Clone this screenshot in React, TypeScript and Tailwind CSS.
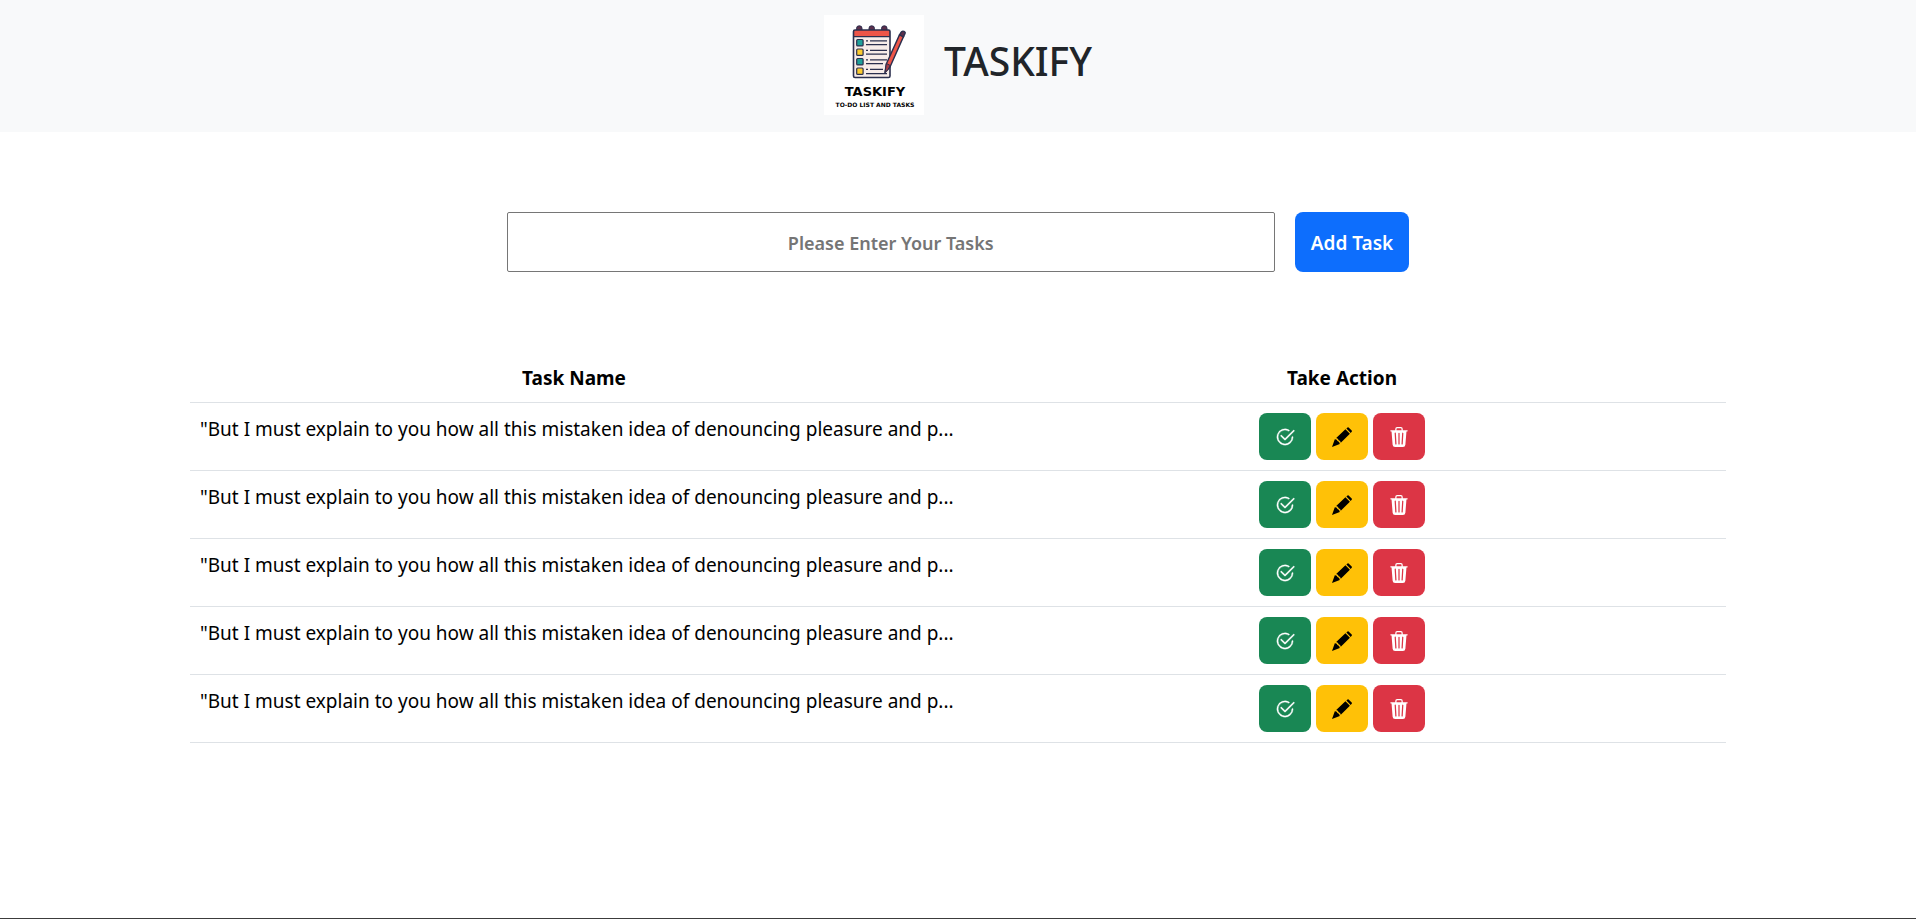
import { useState } from 'react';
import type { FormEvent } from 'react';
import { BsCheck2Circle, BsTrash3Fill } from 'react-icons/bs';

const SAMPLE =
  '"But I must explain to you how all this mistaken idea of denouncing pleasure and p...';

const INITIAL_TASKS = [1, 2, 3, 4, 5].map((id) => ({ id, name: SAMPLE }));

function PencilIcon() {
  return (
    <svg viewBox="0 0 20 20" className="size-5" fill="currentColor" aria-hidden="true">
      <path d="M0 20 2.8 12.2Q5 12 5.500 14 7.600 14.600 7.800 17Z" />
      <path d="M4.200 11 13.400 2.200 17.900 6.800 8.800 15.700Q8.400 13.800 6.700 13.300 6.200 11.400 4.200 11Z" />
      <path d="M14.400 1.500 15.500.4Q16.100-.1 16.600.4L19.700 3.600Q20.200 4.200 19.700 4.700L18.700 6Z" />
    </svg>
  );
}

function NotepadDrawing() {
  return (
    <svg viewBox="0 0 54 54" className="h-[54px] w-[54px]" fill="none" aria-hidden="true">
      <g fill="#5c2f4b" stroke="#2b2f4e" strokeWidth="1">
        <path d="M4.600 6V3.200Q4.600 .8 7.300 .8T10 3.200V6Z" />
        <path d="M17 6V3.200Q17 .8 19.700 .8T22.400 3.200V6Z" />
        <path d="M29.600 6V3.200Q29.600 .8 32.300 .8T35 3.200V6Z" />
      </g>
      <rect x="1.500" y="5" width="36.500" height="47.500" rx="1.500" fill="#f7ece9" />
      <path d="M1.500 5H38V11.500H1.500Z" fill="#ee5548" />
      <rect x="1.500" y="5" width="36.500" height="47.500" rx="1.500" stroke="#2b2f4e" strokeWidth="1.600" />
      <path d="M1.500 11.600H38" stroke="#2b2f4e" strokeWidth="1.200" />
      <g stroke="#2b2f4e" strokeWidth="1.200">
        <rect x="4.700" y="14.500" width="6.400" height="6.400" rx="1" fill="#1fa09a" />
        <rect x="4.700" y="24" width="6.400" height="6.400" rx="1" fill="#fccb2e" />
        <rect x="4.700" y="33.500" width="6.400" height="6.400" rx="1" fill="#1fa09a" />
        <rect x="4.700" y="43" width="6.400" height="6.400" rx="1" fill="#fccb2e" />
        <path d="M14 15.800h2M18 15.800h17M14 19.600h21M14 25.300h2M18 25.300h17M14 29.100h21M14 34.800h2M18 34.800h17M14 38.600h17M14 44.300h2M18 44.300h13M14 48.600h21" />
      </g>
      <path d="M33 47.500 34.300 39 47.600 9.600 51.600 11.400 38 42Z" fill="#ee5548" stroke="#2b2f4e" strokeWidth="1.400" strokeLinejoin="round" />
      <path d="M34.300 38.500 38.300 40.500 36 44.500 33 47.500Z" fill="#a53e47" stroke="#2b2f4e" strokeWidth="1" />
      <path d="M47.500 10 49 7.300Q50.100 5.500 52 6.400T52.800 9L51.500 11.800Z" fill="#5c2f4b" stroke="#2b2f4e" strokeWidth="1.400" />
    </svg>
  );
}

function Logo() {
  return (
    <div className="flex size-[100px] flex-col items-center bg-white pt-[10px] pl-[2px] font-['DejaVu_Sans',sans-serif] font-bold text-black">
      <div className="pl-2">
        <NotepadDrawing />
      </div>
      <span className="mt-2 text-[13px] leading-[10px]">TASKIFY</span>
      <span className="mt-1 text-[6px] leading-[8px] whitespace-nowrap">TO-DO LIST AND TASKS</span>
    </div>
  );
}

export default function App() {
  const [tasks, setTasks] = useState(INITIAL_TASKS);
  const [draft, setDraft] = useState('');

  const addTask = (event: FormEvent) => {
    event.preventDefault();
    if (!draft.trim()) return;
    setTasks([...tasks, { id: Date.now(), name: draft }]);
    setDraft('');
  };

  const button = 'flex h-[47px] w-[52px] items-center justify-center rounded-lg';

  return (
    <div className="flex min-h-screen flex-col bg-white font-['Noto_Sans',sans-serif] text-[19px] leading-[30px] text-black">
      <header className="flex items-center justify-center gap-5 bg-[#f8f9fa] pt-[15px] pb-[17px]">
        <Logo />
        <h1 className="mb-2 text-[39px] leading-[48px] font-medium text-[#212529]">TASKIFY</h1>
      </header>

      <main className="grow">
        <form onSubmit={addTask} className="flex justify-center gap-5 py-20">
          <input
            type="text"
            aria-label="Task"
            value={draft}
            onChange={(event) => setDraft(event.target.value)}
            placeholder="Please Enter Your Tasks"
            className="h-[60px] w-full max-w-3xl rounded-xs border border-[#767676] pt-[2px] text-center text-[18px] font-semibold placeholder:text-[#757575]"
          />
          <button type="submit" className="rounded-lg bg-[#0d6efd] px-4 pt-[2px] font-semibold whitespace-nowrap text-white">
            Add Task
          </button>
        </form>

        <table className="mx-auto w-full max-w-screen-2xl table-fixed border-collapse">
          <thead>
            <tr className="border-b border-[#dee2e6]">
              <th className="px-[10px] pt-[11px] pb-[9px] font-bold">Task Name</th>
              <th className="px-[10px] pt-[11px] pb-[9px] font-bold">Take Action</th>
            </tr>
          </thead>
          <tbody>
            {tasks.map((task) => (
              <tr key={task.id} className="border-b border-[#dee2e6]">
                <td className="px-[10px] pt-[11px] pb-[9px] align-top whitespace-nowrap">{task.name}</td>
                <td className="p-[10px]">
                  <div className="flex justify-center gap-[5px]">
                    <button type="button" aria-label="Complete task" className={`${button} bg-[#198754] text-white`}>
                      <BsCheck2Circle className="size-5" strokeWidth="0.3" />
                    </button>
                    <button type="button" aria-label="Edit task" className={`${button} bg-[#ffc107] text-black`}>
                      <PencilIcon />
                    </button>
                    <button
                      type="button"
                      aria-label="Delete task"
                      onClick={() => setTasks(tasks.filter((other) => other.id !== task.id))}
                      className={`${button} bg-[#dc3545] text-white`}
                    >
                      <BsTrash3Fill className="size-5" />
                    </button>
                  </div>
                </td>
              </tr>
            ))}
          </tbody>
        </table>
      </main>

      <footer className="border-t border-[#3c3c3c]" />
    </div>
  );
}
